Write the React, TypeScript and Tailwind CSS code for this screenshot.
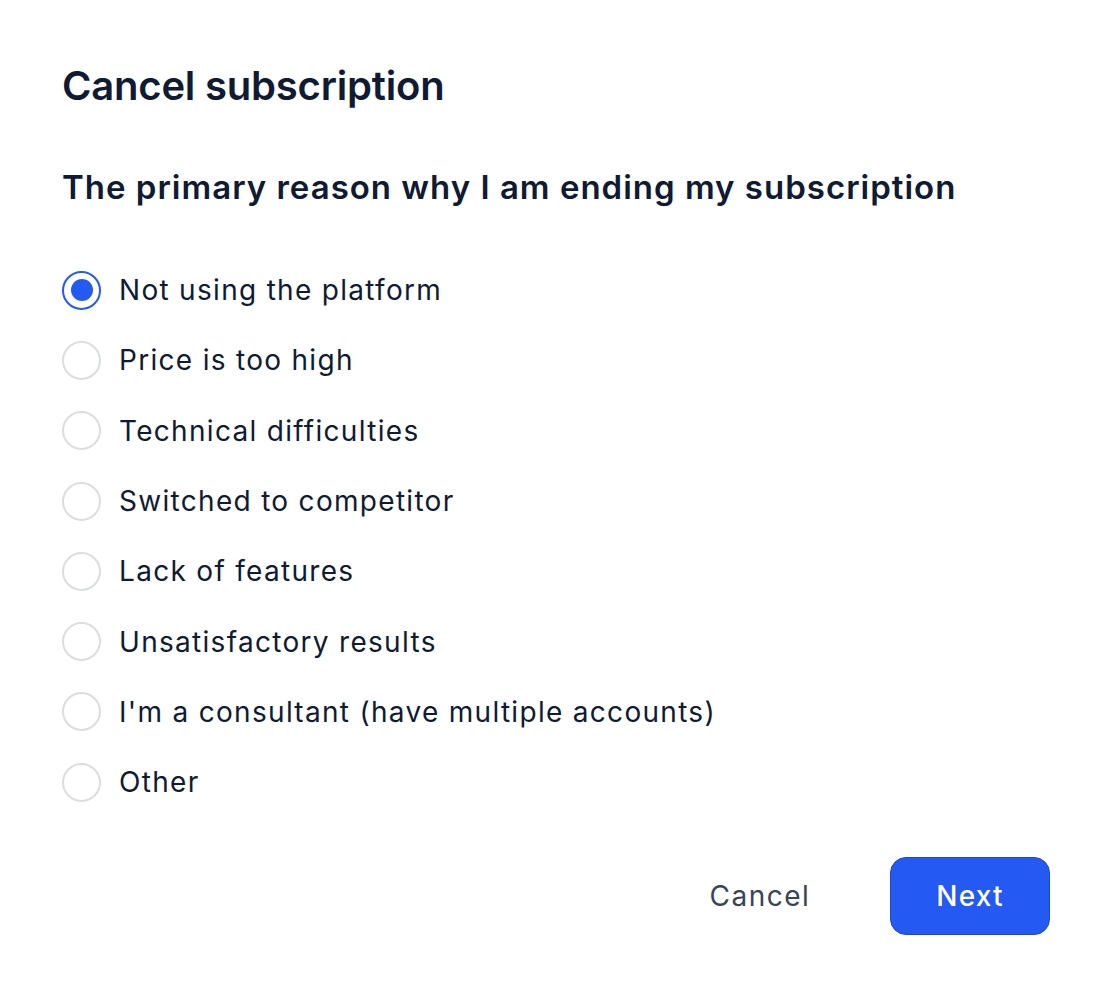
import { useState } from "react";

const reasons = [
  "Not using the platform",
  "Price is too high",
  "Technical difficulties",
  "Switched to competitor",
  "Lack of features",
  "Unsatisfactory results",
  "I'm a consultant (have multiple accounts)",
  "Other",
];

export default function App() {
  const [selected, setSelected] = useState(0);

  return (
    <div className="min-h-[992px] w-full bg-white font-['Inter','Noto_Sans',sans-serif] text-[#0f1a33]">
      <div className="flex flex-col pl-[62px] pr-[64px] pt-[63px]">
        <h1 className="text-[40px] font-semibold leading-[46px] tracking-[-0.2px]">Cancel subscription</h1>

        <h2 className="mt-[58px] text-[33px] font-semibold leading-[40px] tracking-[1px]">
          The primary reason why I am ending my subscription
        </h2>

        <div className="mt-[48px] flex flex-col">
          {reasons.map((reason, i) => (
            <label
              key={reason}
              className="flex h-[70.3px] cursor-pointer items-center gap-[18px]"
              onClick={() => setSelected(i)}
            >
              <span
                className={
                  selected === i
                    ? "flex h-[39px] w-[39px] shrink-0 items-center justify-center rounded-full border-2 border-[#2459f4]"
                    : "flex h-[39px] w-[39px] shrink-0 items-center justify-center rounded-full border-2 border-[#dcdde1]"
                }
              >
                {selected === i && <span className="h-[22px] w-[22px] rounded-full bg-[#2459f4]" />}
              </span>
              <span className="text-[28px] leading-[36px] tracking-[1.3px]">{reason}</span>
            </label>
          ))}
        </div>

        <div className="mt-[40px] flex items-center justify-end gap-[50px]">
          <button className="h-[78px] w-[160px] text-[28px] tracking-[1.5px] text-[#3a4357]">Cancel</button>
          <button className="h-[78px] w-[160px] rounded-[16px] border border-[#1d48cc] bg-[#2459f4] text-[28px] font-medium tracking-[1.2px] text-white">
            Next
          </button>
        </div>
      </div>
    </div>
  );
}
